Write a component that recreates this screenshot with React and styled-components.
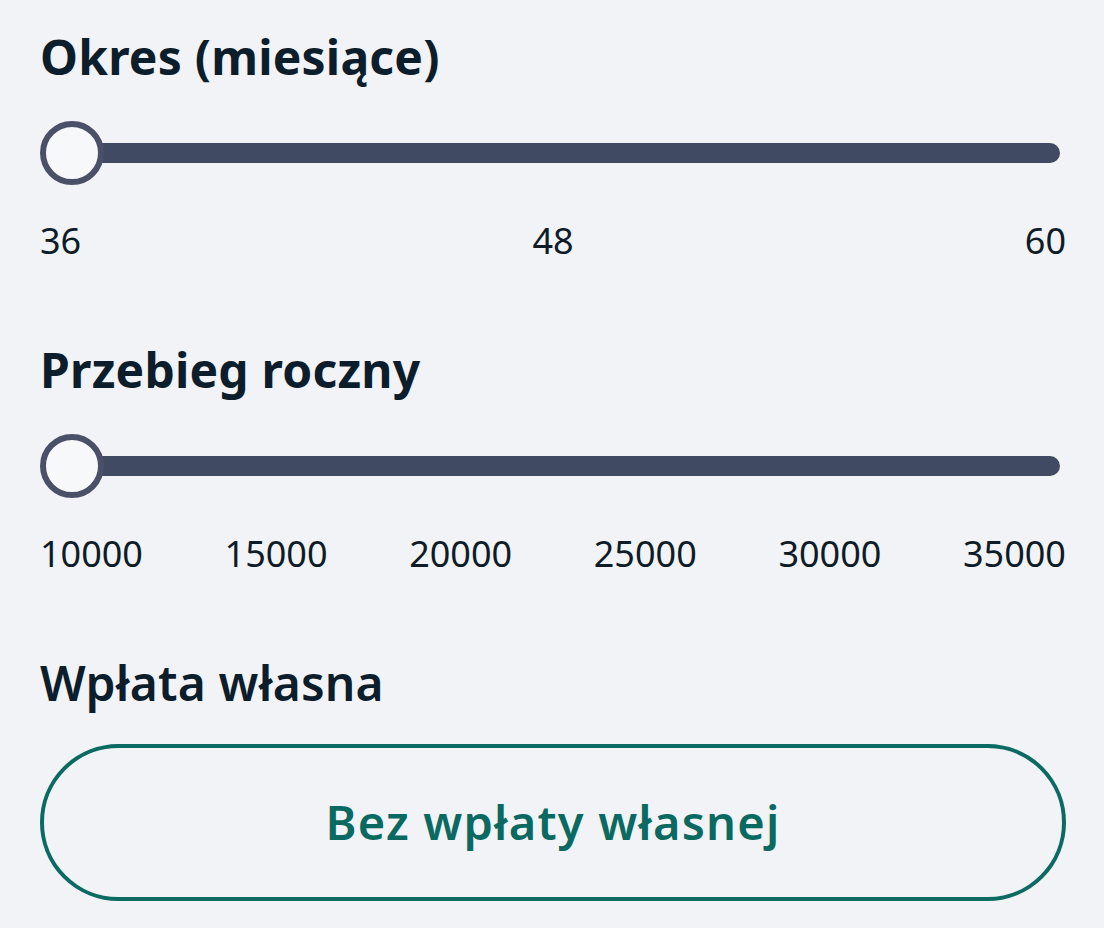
import React from "react";
import styled, { createGlobalStyle } from "styled-components";

const GlobalStyle = createGlobalStyle`
  html, body {
    margin: 0;
    padding: 0;
    background-color: #f2f3f7;
  }
  body {
    font-family: "Noto Sans", "Open Sans", sans-serif;
  }
`;

const Page = styled.div`
  display: flex;
  flex-direction: column;
  padding: 29px 38px 0 40px;
`;

const Section = styled.section`
  display: flex;
  flex-direction: column;
  margin-bottom: ${(props) => props.spacing || 0}px;
`;

const Heading = styled.h2`
  margin: 0 0 ${(props) => props.gap || 36}px 0;
  font-size: 48px;
  line-height: 56px;
  font-weight: ${(props) => props.weight || 700};
  color: #0c1d2b;
  letter-spacing: 0.2px;
`;

const SliderRow = styled.div`
  display: flex;
  align-items: center;
  height: 64px;
  margin-right: 6px;
`;

const Thumb = styled.div`
  position: relative;
  z-index: 1;
  flex: none;
  box-sizing: border-box;
  width: 64px;
  height: 64px;
  border-radius: 50%;
  border: 6px solid #4a5067;
  background-color: #f7f8fa;
`;

const Bar = styled.div`
  flex: 1;
  height: 20px;
  margin-left: -32px;
  border-radius: 10px;
  background-color: #404a62;
`;

const Ticks = styled.div`
  display: flex;
  justify-content: space-between;
  margin-top: 34px;
`;

const Tick = styled.span`
  font-size: 36px;
  line-height: 44px;
  font-weight: 400;
  color: #0e1c28;
`;

const OutlineButton = styled.button`
  box-sizing: border-box;
  width: 100%;
  height: 157px;
  padding: 0 0 2px;
  border: 4px solid #0b6a62;
  border-radius: 79px;
  background: transparent;
  font-family: inherit;
  font-size: 47px;
  font-weight: 600;
  letter-spacing: 1.2px;
  color: #0a6a62;
  cursor: pointer;
`;

function RangeSlider({ marks }) {
  return (
    <>
      <SliderRow role="slider" aria-valuenow={marks[0]}>
        <Thumb />
        <Bar />
      </SliderRow>
      <Ticks>
        {marks.map((m) => (
          <Tick key={m}>{m}</Tick>
        ))}
      </Ticks>
    </>
  );
}

export default function App() {
  return (
    <Page>
      <GlobalStyle />
      <Section spacing={79}>
        <Heading>Okres (miesiące)</Heading>
        <RangeSlider marks={[36, 48, 60]} />
      </Section>
      <Section spacing={79}>
        <Heading>Przebieg roczny</Heading>
        <RangeSlider marks={[10000, 15000, 20000, 25000, 30000, 35000]} />
      </Section>
      <Section>
        <Heading weight={600} gap={33}>
          Wpłata własna
        </Heading>
        <OutlineButton type="button">Bez wpłaty własnej</OutlineButton>
      </Section>
    </Page>
  );
}
